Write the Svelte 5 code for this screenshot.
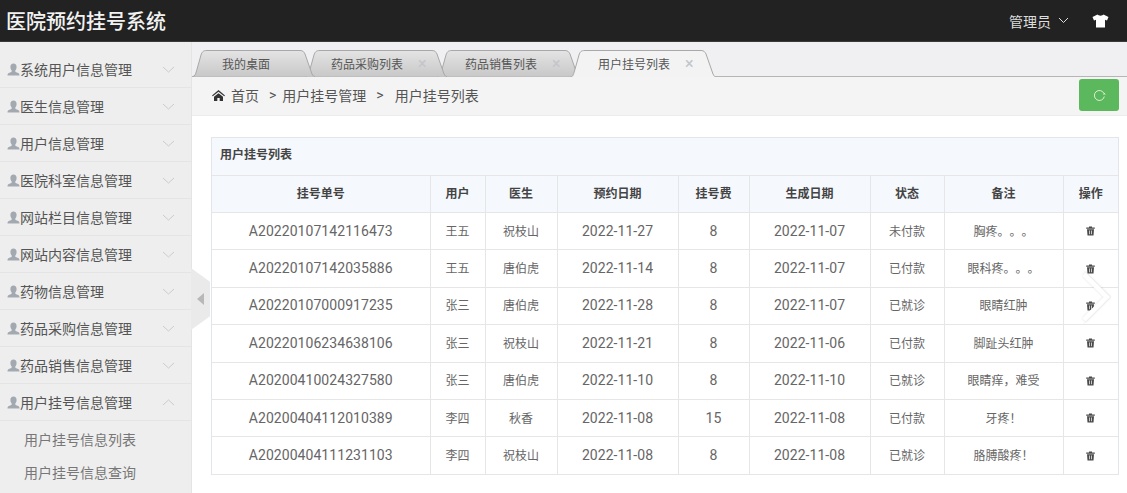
<script>
  const menu = ['系统用户信息管理','医生信息管理','用户信息管理','医院科室信息管理','网站栏目信息管理','网站内容信息管理','药物信息管理','药品采购信息管理','药品销售信息管理','用户挂号信息管理'];
  const tabs = [
    { label: '我的桌面', width: 123, pad: 30, z: 3, close: false },
    { label: '药品采购列表', width: 142, pad: 26, z: 2, close: true },
    { label: '药品销售列表', width: 143, pad: 28, z: 1, close: true },
    { label: '用户挂号列表', width: 146, pad: 28, z: 4, close: true, active: true }
  ];
  const heads = ['挂号单号','用户','医生','预约日期','挂号费','生成日期','状态','备注','操作'];
  const rows = [
    ['A20220107142116473','王五','祝枝山','2022-11-27','8','2022-11-07','未付款','胸疼。。。'],
    ['A20220107142035886','王五','唐伯虎','2022-11-14','8','2022-11-07','已付款','眼科疼。。。'],
    ['A20220107000917235','张三','唐伯虎','2022-11-28','8','2022-11-07','已就诊','眼睛红肿'],
    ['A20220106234638106','张三','祝枝山','2022-11-21','8','2022-11-06','已付款','脚趾头红肿'],
    ['A20200410024327580','张三','唐伯虎','2022-11-10','8','2022-11-10','已就诊','眼睛痒，难受'],
    ['A20200404112010389','李四','秋香','2022-11-08','15','2022-11-08','已付款','牙疼！'],
    ['A20200404111231103','李四','祝枝山','2022-11-08','8','2022-11-08','已就诊','胳膊酸疼！']
  ];
  const latin = new Set([0, 3, 4, 5]);
  const tabPath = (w, b) => `M0.5 ${b} C3 ${b} 3.500 24 4.500 21 L9 5 C10 2 11 0.500 15 0.500 L${w - 15} 0.500 C${w - 12} 0.500 ${w - 11} 2 ${w - 10} 4 L${w - 3} 24 C${w - 2} 26 ${w - 1} ${b} ${w} ${b}`;
</script>

<div class="page">
  <header class="topbar">
    <h1 class="brand">医院预约挂号系统</h1>
    <div class="user">
      <span>管理员</span>
      <svg class="caret" width="11" height="7" viewBox="0 0 11 7"><path d="M1 1l4.500 4.500L10 1" fill="none" stroke="#ddd" stroke-width="1"/></svg>
      <svg class="shirt" width="17" height="14" viewBox="0 0 17 14"><path d="M5.500 0.500 L0.500 3 L2 6.500 L4 5.800 V13.500 H13 V5.800 L15 6.500 L16.500 3 L11.500 0.500 C10.500 2 6.500 2 5.500 0.500Z" fill="#fff"/></svg>
    </div>
  </header>

  <div class="body">
    <aside class="sidebar">
      {#each menu as item, i}
        <div class="menu-item">
          <svg class="person" width="13" height="13" viewBox="0 0 13 13"><path d="M6.500 0.500C8.500 0.500 9.600 2 9.600 4C9.600 5.800 8.800 7 8.200 7.700C8.100 8.500 8.600 9 10 9.600C11.800 10.300 12.500 10.800 12.500 12.500H0.500C0.500 10.800 1.200 10.300 3 9.600C4.400 9 4.900 8.500 4.800 7.700C4.200 7 3.400 5.800 3.400 4C3.400 2 4.500 0.500 6.500 0.500Z" fill="#a3a9b1"/></svg>
          <span class="menu-label">{item}</span>
          <svg class="chev" width="13" height="7" viewBox="0 0 13 7"><path d={i === 9 ? 'M1 6l5.500-5 5.500 5' : 'M1 1l5.500 5 5.500-5'} fill="none" stroke="#ccc" stroke-width="1"/></svg>
        </div>
      {/each}
      <div class="submenu">
        <div>用户挂号信息列表</div>
        <div>用户挂号信息查询</div>
      </div>
    </aside>

    <main class="main">
      <nav class="tabs">
        <svg class="defs" width="0" height="0">
          <defs>
            <linearGradient id="tabgrad" x1="0" y1="0" x2="0" y2="1">
              <stop offset="0" stop-color="#e4e4e4"/>
              <stop offset="1" stop-color="#c8c8c8"/>
            </linearGradient>
          </defs>
        </svg>
        {#each tabs as t}
          <div class="tab" style="width:{t.width}px;padding-left:{t.pad}px;z-index:{t.z}">
            <svg class="tab-bg" width={t.width} height="27" viewBox="0 0 {t.width} 27">
              <path d={tabPath(t.width, t.active ? 27 : 26.5)} fill={t.active ? '#f3f3f4' : 'url(#tabgrad)'} stroke="#a8a8a8" stroke-width="1"/>
            </svg>
            <span class="tab-label">{t.label}</span>
            {#if t.close}<span class="tab-x">×</span>{/if}
          </div>
        {/each}
      </nav>

      <div class="crumbs">
        <div class="crumb-text">
          <svg width="13" height="11" viewBox="0 0 13 11"><path d="M6.500 0L0 5.400l0.800 0.900L6.500 1.700l5.700 4.600 0.800-0.900zM2 6.800V11h3.300V8h2.400v3H11V6.800L6.500 3.200z" fill="#333"/></svg>
          <span>首页</span><span class="sep">&gt;</span><span>用户挂号管理</span><span class="sep wide">&gt;</span><span>用户挂号列表</span>
        </div>
        <button class="refresh" aria-label="刷新">
          <svg width="13" height="13" viewBox="0 0 13 13"><path d="M11 4.500A5 5 0 1 0 11.300 7.500" fill="none" stroke="#d8f0d8" stroke-width="1"/><path d="M9.800 5.500h3l-1.500-1.700z" fill="#d8f0d8"/></svg>
        </button>
      </div>

      <section class="content">
        <div class="collapse"><i></i></div>
        <div class="panel">
          <div class="panel-title">用户挂号列表</div>
          <table>
            <colgroup>
              <col style="width:218px"/><col style="width:55px"/><col style="width:72px"/><col style="width:121px"/><col style="width:71px"/><col style="width:121px"/><col style="width:74px"/><col style="width:119px"/><col style="width:55px"/>
            </colgroup>
            <thead>
              <tr>{#each heads as h}<th>{h}</th>{/each}</tr>
            </thead>
            <tbody>
              {#each rows as r}
                <tr>
                  {#each r as c, j}<td class:num={latin.has(j)}>{c}</td>{/each}
                  <td class="op">
                    <svg class="trash" width="9" height="10" viewBox="0 0 9 10"><path d="M3 0.500h3v1h2.800v1.200H0.200V1.500H3zM1 3.300h7l-0.500 6.200H1.500zM3 4.500v3.800h0.700V4.500zM5.200 4.500v3.800h0.700V4.500z" fill="#4a4a4a" fill-rule="evenodd"/></svg>
                  </td>
                </tr>
              {/each}
            </tbody>
          </table>
        </div>
        <svg class="next" width="34" height="54" viewBox="0 0 34 54"><path d="M4 4L27 27L4 50" fill="none" stroke="#fff" stroke-width="5"/><path d="M4 0.500L30.500 27L4 53.500" fill="none" stroke="#000" stroke-opacity=".06" stroke-width="1"/></svg>
      </section>
    </main>
  </div>
</div>

<style>
  :global(body) {
    margin: 0;
    background: #fff;
    font-family: Roboto, "Noto Sans CJK SC", sans-serif;
    text-spacing-trim: space-all;
    overflow: hidden;
  }
  .page { width: 1127px; height: 493px; overflow: hidden; display: flex; flex-direction: column; }
  .topbar {
    height: 41px; flex: none; background: #222; color: #fff;
    display: flex; align-items: center; justify-content: space-between;
    padding: 0 18px 0 6px; border-bottom: 1px solid #3a3a3a; box-sizing: content-box;
  }
  .brand { margin: 0; font-size: 20px; font-weight: 500; color: #f2f2f2; letter-spacing: 0; }
  .user { display: flex; align-items: center; font-size: 14px; color: #ddd; }
  .caret { margin-left: 7px; }
  .shirt { margin-left: 23px; }
  .body { flex: 1; display: flex; min-height: 0; }
  .sidebar { width: 191px; flex: none; background: #eee; border-right: 1px solid #e4e4e4; padding-top: 9px; }
  .menu-item {
    height: 36px; border-bottom: 1px solid #e4e4e4; display: flex; align-items: center;
    padding: 0 16px 0 7px; font-size: 14px; color: #555;
  }
  .person { flex: none; }
  .menu-label { flex: 1; }
  .submenu { padding: 3px 0 0 24px; font-size: 14px; color: #777; }
  .submenu div { height: 33px; line-height: 33px; }
  .main { flex: 1; min-width: 0; display: flex; flex-direction: column; }
  .tabs {
    height: 34px; flex: none; display: flex; align-items: flex-end; background: #f0f0f2;
    border-bottom: 1px solid #b5b5b5;
  }
  .defs { position: absolute; }
  .tab {
    position: relative; height: 27px; margin-right: -10px; margin-bottom: -1px;
    display: flex; align-items: center; font-size: 12px; color: #555; box-sizing: border-box; flex: none;
  }
  .tab-bg { position: absolute; left: 0; top: 0; }
  .tab-label, .tab-x { position: relative; }
  .tab-x { margin-left: 15px; color: #c4c6cb; font-size: 16px; font-weight: 500; line-height: 1; }
  .crumbs {
    height: 39px; flex: none; box-sizing: border-box; background: #f4f4f4; border-bottom: 1px solid #ececec;
    display: flex; align-items: center; justify-content: space-between; padding: 0 8px 0 20px;
  }
  .crumb-text { display: flex; align-items: center; gap: 5px; font-size: 14px; color: #555; margin-top: -2px; }
  .crumb-text svg { margin-right: 1px; }
  .crumb-text .sep { margin: 0 1px 0 5px; }
  .crumb-text .sep.wide { margin-right: 6px; }
  .refresh {
    width: 40px; height: 32px; border: 0; border-radius: 3px; background: #5cb85c; padding: 0;
    display: flex; align-items: center; justify-content: center; align-self: flex-start; margin-top: 2px;
  }
  .content { position: relative; flex: 1; padding: 21px 8px 0 19px; }
  .collapse {
    position: absolute; left: -1px; top: 152px; width: 19px; height: 62px; background: #eaeaea;
    clip-path: polygon(0 0, 100% 22%, 100% 78%, 0 100%);
    display: flex; align-items: center; justify-content: center;
  }
  .collapse i { width: 0; height: 0; border: 6px solid transparent; border-left: 0; border-right: 7px solid #b8b8b8; }
  .panel { border: 1px solid #e2e6ea; border-bottom: 0; }
  .panel-title {
    height: 37px; box-sizing: border-box; line-height: 35px; background: #f5f9fd; padding-left: 8px;
    font-size: 12px; font-weight: 700; color: #444;
  }
  table { width: 100%; border-collapse: collapse; table-layout: fixed; }
  th, td { padding: 0; text-align: center; border: 1px solid #e6e6e6; font-size: 12px; color: #666; box-sizing: border-box; }
  th { height: 37px; padding-bottom: 3px; background: #f5f9fd; font-weight: 700; color: #444; }
  td { height: 37.4px; padding-bottom: 2px; background: #fff; }
  th:first-child, td:first-child { border-left: 0; }
  th:last-child, td:last-child { border-right: 0; }
  td.num { font-size: 14px; letter-spacing: 0.05px; padding-bottom: 1px; }
  td.op { padding-bottom: 0; }
  .trash { display: block; margin: 0 auto; }
  .next { position: absolute; right: 13px; top: 154px; filter: drop-shadow(0 0 1px rgba(0,0,0,.12)); }
</style>
